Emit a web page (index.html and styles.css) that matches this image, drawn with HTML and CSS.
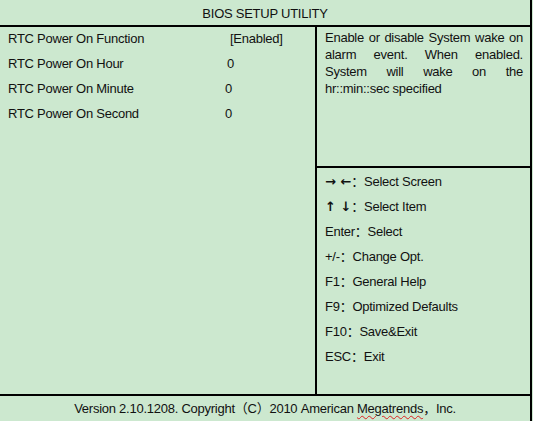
FILE: index.html
```html
<!doctype html>
<html lang="en-US">
  <head>
    <meta charset="utf-8" />
    <title>BIOS Setup Utility</title>
    <link rel="stylesheet" href="styles.css">
  </head>

  <body>
    <div class="bios">
      <div class="title">BIOS SETUP UTILITY</div>

      <div class="main">
        <div class="settings">
          <div class="row">
            <span class="label">RTC Power On Function</span>
            <span class="value option">[Enabled]</span>
          </div>
          <div class="row">
            <span class="label">RTC Power On Hour</span>
            <span class="value hour">0</span>
          </div>
          <div class="row">
            <span class="label">RTC Power On Minute</span>
            <span class="value">0</span>
          </div>
          <div class="row">
            <span class="label">RTC Power On Second</span>
            <span class="value">0</span>
          </div>
        </div>

        <div class="side">
          <!-- help for the selected item -->
          <p class="help">Enable or disable System wake on alarm event. When enabled. System will wake on the hr::min::sec specified</p>

          <ul class="keys">
            <li><span class="arrows">→ ←</span>：Select Screen</li>
            <li><span class="arrows">↑ ↓</span>：Select Item</li>
            <li>Enter：Select</li>
            <li>+/-：Change Opt.</li>
            <li>F1：General Help</li>
            <li>F9：Optimized Defaults</li>
            <li>F10：Save&amp;Exit</li>
            <li>ESC：Exit</li>
          </ul>
        </div>
      </div>

      <div class="footer">Version 2.10.1208. Copyright（C）2010 American <span class="typo">Megatrends</span>，Inc.</div>
    </div>
  </body>
</html>
```

FILE: styles.css
```css
body {
  margin: 0;
  background-color: #cce8cf;
  color: #111;
  font-family: "Liberation Sans", "Noto Sans CJK SC", sans-serif;
  font-size: 13px;
  letter-spacing: -0.25px;
}

.bios {
  width: 530px;
  height: 421px;
  display: flex;
  flex-direction: column;
  border-right: 2px solid #000;
}

.title {
  height: 25px;
  line-height: 27px;
  text-align: center;
  border-bottom: 2px solid #000;
}

.main {
  display: flex;
  height: 368px;
  border-bottom: 2px solid #000;
}

/* left column: settings list */
.settings {
  width: 317px;
  border-right: 2px solid #000;
  padding-left: 8px;
  box-sizing: border-box;
}

.row {
  display: flex;
  height: 25px;
  line-height: 23px;
}

.label {
  width: 217px;
}

.option {
  margin-left: 5px;
}

.hour {
  margin-left: 2px;
}

/* right column: help + keys */
.side {
  flex: 1;
  display: flex;
  flex-direction: column;
}

.help {
  height: 141px;
  margin: 0;
  padding: 2px 7px 0 8px;
  box-sizing: border-box;
  line-height: 17px;
  text-align: justify;
  border-bottom: 2px solid #000;
}

.keys {
  list-style: none;
  margin: 0;
  padding: 2px 0 0 8px;
}

.keys li {
  height: 25px;
  line-height: 24px;
}

.arrows {
  font-weight: bold;
  font-family: "DejaVu Sans", sans-serif;
  font-size: 13px;
  letter-spacing: 0;
}

.footer {
  flex: 1;
  text-align: center;
  line-height: 25px;
}

.typo {
  text-decoration: underline wavy #d22;
  text-decoration-thickness: 1px;
  text-underline-offset: 2px;
}
```
